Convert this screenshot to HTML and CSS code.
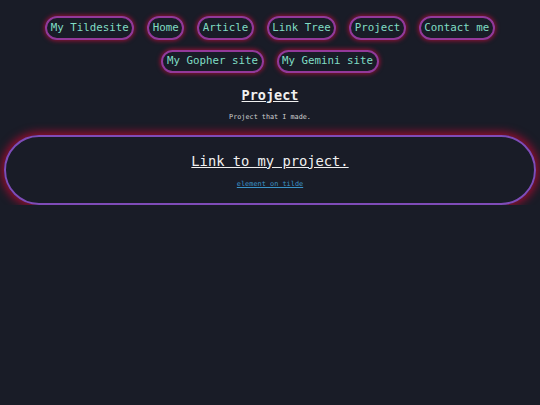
FILE: index.html
```html
<!DOCTYPE html>
<html lang="en">
<head>
<meta charset="utf-8">
<title>Project</title>
<link rel="stylesheet" href="styles.css">
</head>
<body>
<nav class="nav">
  <a class="pill" href="#">My Tildesite</a>
  <a class="pill" href="#">Home</a>
  <a class="pill" href="#">Article</a>
  <a class="pill" href="#">Link Tree</a>
  <a class="pill" href="#">Project</a>
  <a class="pill" href="#">Contact me</a>
  <a class="pill" href="#">My Gopher site</a>
  <a class="pill" href="#">My Gemini site</a>
</nav>
<header class="intro">
  <h1 class="title">Project</h1>
  <p class="sub">Project that I made.</p>
</header>
<section class="card">
  <a class="card-title" href="#">Link to my project.</a>
  <a class="card-link" href="#">element on tilde</a>
</section>
</body>
</html>
```
FILE: styles.css
```css
html, body {
  margin: 0;
  padding: 0;
  background: #191c27;
}
body {
  font-family: "DejaVu Sans Mono", "Liberation Mono", monospace;
  color: #e6e6e6;
}
.nav {
  display: flex;
  flex-wrap: wrap;
  justify-content: center;
  gap: 10px 13px;
  padding: 16px 10px 0;
}
.pill {
  display: block;
  font-size: 10.8px;
  line-height: 12.6px;
  color: #80dcc4;
  text-decoration: none;
  padding: 3.5px 3.5px;
  border: 2px solid #93399a;
  border-radius: 14px;
  box-shadow: 0 0 4px 1px rgba(165, 15, 55, 0.85);
}
.intro {
  display: flex;
  flex-direction: column;
  align-items: center;
  margin-top: 14px;
}
.title {
  margin: 0;
  font-size: 13.5px;
  line-height: 16px;
  font-weight: bold;
  text-decoration: underline;
  color: #f0f0f0;
}
.sub {
  margin: 9.5px 0 0;
  font-size: 6.8px;
  line-height: 8px;
  color: #d0d0d0;
}
.card {
  display: flex;
  flex-direction: column;
  align-items: center;
  margin: 14px 4px 0;
  padding: 16px 0 15px;
  border: 2px solid #7f4cb8;
  border-radius: 36px;
  box-shadow: 0 0 8px 3px rgba(160, 12, 48, 0.9);
}
.card-title {
  font-size: 13.75px;
  line-height: 16px;
  font-weight: normal;
  color: #f0f0f0;
  text-decoration: underline;
}
.card-link {
  margin-top: 11px;
  font-size: 6.9px;
  line-height: 8px;
  color: #3b93c8;
  text-decoration: underline;
}
```
